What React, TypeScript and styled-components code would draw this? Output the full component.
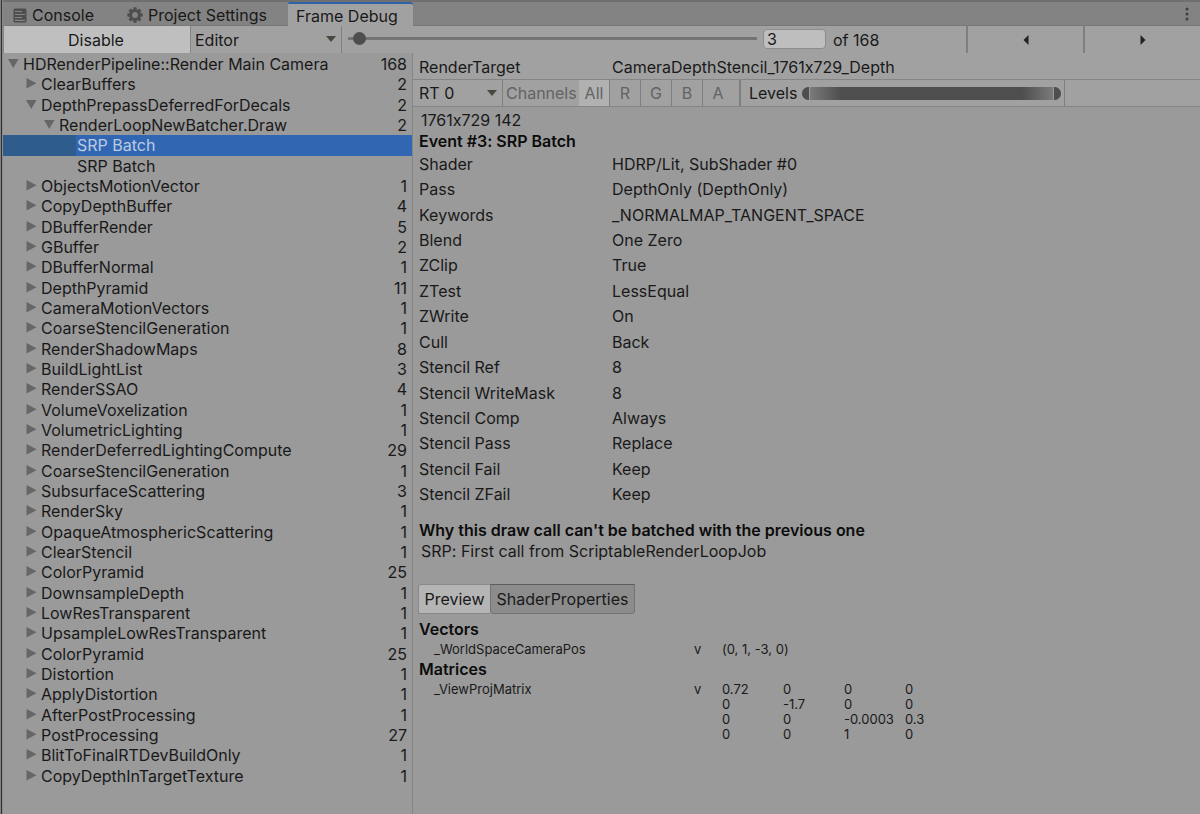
import React, { useState } from "react";
import styled, { createGlobalStyle } from "styled-components";

const c = {
  panel: "#9a9a9a",
  bar: "#a1a1a1",
  tabBar: "#838383",
  line: "#858585",
  divider: "#7f7f7f",
  text: "#191919",
  dim: "#636363",
  arrow: "#666666",
  dark: "#4e4e4e",
  blue: "#3166b3",
};

const GlobalStyle = createGlobalStyle`
  * { box-sizing: border-box; }
  body {
    margin: 0;
    background: ${c.panel};
    color: ${c.text};
    font: 16px/20px Inter, "Liberation Sans", sans-serif;
    font-feature-settings: "calt" 0;
  }
  button, input, select { font: inherit; font-feature-settings: inherit; color: inherit; margin: 0; }
  button { cursor: pointer; }
`;

const Window = styled.div`
  min-height: 100vh;
  display: flex;
  flex-direction: column;
  border-left: 1px solid #828282;
  box-shadow: inset 1px 0 0 #303030, inset 2px 0 0 #8c8c8c;
  padding-left: 2px;
`;

const TabBar = styled.nav`
  height: 26px;
  display: flex;
  align-items: stretch;
  background: ${c.tabBar};
  border-top: 2px solid #6f6f6f;
  border-bottom: 1px solid #787878;
`;

const Tab = styled.button<{ $active?: boolean; $width: number }>`
  flex: 0 0 ${(p) => p.$width}px;
  display: flex;
  align-items: center;
  gap: 5px;
  padding: 1px 8px 0 ${(p) => (p.$active ? 8 : 10)}px;
  border: 0;
  border-top: 2px solid ${(p) => (p.$active ? "#2f62a6" : "transparent")};
  border-radius: 2px 3px 0 0;
  background: ${(p) => (p.$active ? c.bar : "transparent")};
  margin-bottom: ${(p) => (p.$active ? -1 : 0)}px;
  white-space: nowrap;
  line-height: 18px;
`;

const MenuButton = styled.button`
  margin-left: auto;
  width: 26px;
  padding: 0;
  border: 0;
  background: none;
  display: grid;
  place-items: center;
`;

const Toolbar = styled.div`
  height: 27px;
  display: flex;
  align-items: stretch;
  background: ${c.bar};
`;

const DisableButton = styled.button`
  flex: 0 0 188px;
  padding: 0 2px 0 0;
  border: 0;
  border-left: 1px solid ${c.line};
  border-right: 1px solid ${c.line};
  background: #bfbfbf;
`;

const SelectBox = styled.div<{ $width: number; $indent: number }>`
  position: relative;
  flex: 0 0 ${(p) => p.$width}px;
  border-right: 1px solid ${c.divider};
  display: flex;
  select { padding-left: ${(p) => p.$indent}px; }
  svg {
    position: absolute;
    right: 5px;
    top: 10px;
    pointer-events: none;
  }
`;

const Select = styled.select`
  appearance: none;
  width: 100%;
  padding: 0 20px 0 0;
  border: 0;
  background: transparent;
`;

const FrameSlider = styled.input`
  appearance: none;
  flex: 1 1 409px;
  min-width: 60px;
  height: 24px;
  margin: 0 6px;
  background: transparent;
  &::-webkit-slider-runnable-track {
    height: 3px;
    background: #747474;
  }
  &::-webkit-slider-thumb {
    appearance: none;
    width: 13px;
    height: 13px;
    margin-top: -5px;
    border-radius: 50%;
    background: ${c.dark};
  }
`;

const FrameInput = styled.input`
  width: 63px;
  height: 20px;
  margin-top: 3px;
  padding: 0 3px;
  border: 1px solid #8c8c8c;
  border-radius: 4px;
  background: #bebebe;
`;

const FrameTotal = styled.span`
  flex: 0 0 140px;
  padding: 4px 0 0 7px;
`;

const StepButton = styled.button`
  flex: 0 0 117px;
  padding: 0;
  border: 0;
  border-left: 2px solid ${c.divider};
  background: none;
  display: grid;
  place-items: center;
`;

const Body = styled.main`
  flex: 1;
  display: grid;
  grid-template-columns: minmax(0, 410fr) minmax(0, 787fr);
`;

const TreePane = styled.section`
  border-right: 1px solid ${c.line};
`;

const Tree = styled.ul`
  list-style: none;
  margin: 0;
  padding: 1px 0 0;
  min-height: 733px;
  display: grid;
  grid-auto-rows: 1fr;
`;

const TreeItem = styled.li`
  display: flex;
`;

const TreeRow = styled.button<{ $depth: number; $selected?: boolean }>`
  flex: 1;
  display: flex;
  align-items: center;
  gap: 4px;
  padding: 0 5px 0 ${(p) => 5 + p.$depth * 18}px;
  border: 0;
  text-align: left;
  line-height: 20px;
  color: ${(p) => (p.$selected ? "#bccbe0" : c.text)};
  background: ${(p) =>
    p.$selected ? `linear-gradient(90deg, #2e5c8d 73px, ${c.blue} 73px)` : "transparent"};
  svg, i { flex: 0 0 11px; }
`;

const TreeCount = styled.span`
  margin-left: auto;
`;

const Details = styled.section`
  display: flex;
  flex-direction: column;
`;

const TargetRow = styled.div`
  display: flex;
  align-items: center;
  height: 26px;
  padding: 1px 0 0 6px;
  background: ${c.bar};
  span:first-child { flex: 0 0 193px; }
`;

const ChannelBar = styled.div`
  display: flex;
  height: 28px;
  background: ${c.bar};
  border-top: 1px solid ${c.line};
  border-bottom: 1px solid ${c.line};
`;

const ChannelLabel = styled.span`
  flex: 0 0 76px;
  padding: 3px 0 0 3px;
  color: ${c.dim};
  white-space: nowrap;
`;

const ChannelButton = styled.button<{ $on?: boolean; $last?: boolean }>`
  flex: 0 0 ${(p) => (p.$last ? 38 : 31)}px;
  padding: 0 ${(p) => (p.$last ? 6 : 0)}px 0 0;
  border: 0;
  border-right: ${(p) => (p.$last ? 2 : 1)}px solid ${c.divider};
  color: ${c.dim};
  background: ${(p) => (p.$on ? "#b1b1b1" : "none")};
`;

const LevelsGroup = styled.div`
  flex: 0 1 324px;
  display: flex;
  align-items: center;
  gap: 5px;
  padding: 0 3px 0 8px;
  border-right: 1px solid ${c.divider};
`;

const LevelTrack = styled.div`
  position: relative;
  flex: 1;
  height: 13px;
  border-radius: 7px;
  background: linear-gradient(90deg, #7c7c7c 7px, ${c.dark} 15%, ${c.dark} 85%, #7c7c7c calc(100% - 7px));
`;

const LevelInput = styled.input<{ $end?: boolean }>`
  appearance: none;
  position: absolute;
  inset: 0;
  width: 100%;
  height: 13px;
  background: transparent;
  pointer-events: none;
  &::-webkit-slider-thumb {
    appearance: none;
    pointer-events: auto;
    width: 8px;
    height: 13px;
    background: ${c.dark};
    border: 0 solid #9a9a9a;
    border-width: ${(p) => (p.$end ? "0 0 0 1px" : "0 1px 0 0")};
    border-radius: ${(p) => (p.$end ? "0 7px 7px 0" : "7px 0 0 7px")};
  }
`;

const Content = styled.div`
  padding: 2px 6px 0 6px;
`;

const Note = styled.p`
  margin: 0;
  padding-left: 2px;
  line-height: 22px;
`;

const Heading = styled.h2`
  margin: 0;
  font-size: 16px;
  font-weight: 600;
  line-height: 20px;
  color: #0c0c0c;
`;

const PropertyTable = styled.table`
  width: 100%;
  height: 356px;
  margin-bottom: 13px;
  border-collapse: collapse;
  table-layout: fixed;
  th, td { padding: 0; text-align: left; font-weight: 400; }
  th { width: 193px; }
`;

const ViewTabs = styled.div`
  display: flex;
  margin: 22px 0 5px -1px;
`;

const ViewTab = styled.button<{ $pressed?: boolean }>`
  flex: 0 0 ${(p) => (p.$pressed ? 145 : 72)}px;
  height: 30px;
  padding: 0;
  border: 1px solid ${(p) => (p.$pressed ? "#737373" : "#888888")};
  border-top-color: ${(p) => (p.$pressed ? "#5e5e5e" : "#8a8a8a")};
  border-right-width: ${(p) => (p.$pressed ? 1 : 0)}px;
  border-radius: ${(p) => (p.$pressed ? "0 0 4px 4px" : "3px 0 0 0")};
  background: ${(p) => (p.$pressed ? "#8c8c8c" : "#b5b5b5")};
`;

const ValueTable = styled.table`
  border-collapse: collapse;
  table-layout: fixed;
  width: 520px;
  font-size: 13px;
  line-height: 15px;
  th, td { padding: 0; text-align: left; font-weight: 400; white-space: nowrap; }
  th { padding-left: 15px; }
`;

const ValueBlock = styled.div`
  padding: 3px 0 2px;
`;

type Node = { name: string; count?: number; depth: number; open?: boolean; selected?: boolean };

const leaf = (name: string, count: number): Node => ({ name, count, depth: 1 });

const nodes: Node[] = [
  { name: "HDRenderPipeline::Render Main Camera", count: 168, depth: 0, open: true },
  leaf("ClearBuffers", 2),
  { name: "DepthPrepassDeferredForDecals", count: 2, depth: 1, open: true },
  { name: "RenderLoopNewBatcher.Draw", count: 2, depth: 2, open: true },
  { name: "SRP Batch", depth: 3, selected: true },
  { name: "SRP Batch", depth: 3 },
  leaf("ObjectsMotionVector", 1),
  leaf("CopyDepthBuffer", 4),
  leaf("DBufferRender", 5),
  leaf("GBuffer", 2),
  leaf("DBufferNormal", 1),
  leaf("DepthPyramid", 11),
  leaf("CameraMotionVectors", 1),
  leaf("CoarseStencilGeneration", 1),
  leaf("RenderShadowMaps", 8),
  leaf("BuildLightList", 3),
  leaf("RenderSSAO", 4),
  leaf("VolumeVoxelization", 1),
  leaf("VolumetricLighting", 1),
  leaf("RenderDeferredLightingCompute", 29),
  leaf("CoarseStencilGeneration", 1),
  leaf("SubsurfaceScattering", 3),
  leaf("RenderSky", 1),
  leaf("OpaqueAtmosphericScattering", 1),
  leaf("ClearStencil", 1),
  leaf("ColorPyramid", 25),
  leaf("DownsampleDepth", 1),
  leaf("LowResTransparent", 1),
  leaf("UpsampleLowResTransparent", 1),
  leaf("ColorPyramid", 25),
  leaf("Distortion", 1),
  leaf("ApplyDistortion", 1),
  leaf("AfterPostProcessing", 1),
  leaf("PostProcessing", 27),
  leaf("BlitToFinalRTDevBuildOnly", 1),
  leaf("CopyDepthInTargetTexture", 1),
];

const properties: [string, string][] = [
  ["Shader", "HDRP/Lit, SubShader #0"],
  ["Pass", "DepthOnly (DepthOnly)"],
  ["Keywords", "_NORMALMAP_TANGENT_SPACE"],
  ["Blend", "One Zero"],
  ["ZClip", "True"],
  ["ZTest", "LessEqual"],
  ["ZWrite", "On"],
  ["Cull", "Back"],
  ["Stencil Ref", "8"],
  ["Stencil WriteMask", "8"],
  ["Stencil Comp", "Always"],
  ["Stencil Pass", "Replace"],
  ["Stencil Fail", "Keep"],
  ["Stencil ZFail", "Keep"],
];

const matrix = [
  ["0.72", "0", "0", "0"],
  ["0", "-1.7", "0", "0"],
  ["0", "0", "-0.0003", "0.3"],
  ["0", "0", "1", "0"],
];

const Foldout = ({ open }: { open?: boolean }) => (
  <svg width="11" height="14" viewBox="0 0 11 14" aria-hidden="true">
    <path d={open ? "M0 2h10.5L5.3 11z" : "M0.5 1v10.5l10-5.2z"} fill={c.arrow} />
  </svg>
);

const DropArrow = () => (
  <svg width="10" height="6" viewBox="0 0 10 6" aria-hidden="true">
    <path d="M0 0h10L5 6z" fill="#484840" />
  </svg>
);

const ConsoleIcon = () => (
  <svg width="14" height="15" viewBox="0 0 14 15" aria-hidden="true">
    <rect x="0.5" y="0.5" width="13" height="14" rx="1.5" fill={c.dark} />
    <path d="M2 3.5h7M2 6.5h10M2 9.5h7M2 12.3h10" stroke="#858585" strokeWidth="1.2" />
  </svg>
);

const GearIcon = () => (
  <svg width="16" height="16" viewBox="0 0 16 16" aria-hidden="true">
    <g fill={c.dark}>
      {[0, 45, 90, 135].map((a) => (
        <rect key={a} x="6.3" y="0.3" width="3.4" height="15.4" rx="0.8" transform={`rotate(${a} 8 8)`} />
      ))}
      <circle cx="8" cy="8" r="5.8" />
    </g>
    <circle cx="8" cy="8" r="2.9" fill={c.tabBar} />
  </svg>
);

const Columns = () => (
  <colgroup>
    <col style={{ width: 275 }} />
    <col style={{ width: 28 }} />
    <col style={{ width: 61 }} />
    <col style={{ width: 61 }} />
    <col style={{ width: 61 }} />
    <col />
  </colgroup>
);

export default function App() {
  const [frame, setFrame] = useState(3);
  const step = (d: number) => setFrame((f) => Math.min(168, Math.max(1, f + d)));

  return (
    <Window>
      <GlobalStyle />
      <TabBar>
        <Tab $width={114}><ConsoleIcon />Console</Tab>
        <Tab $width={171}><GearIcon />Project Settings</Tab>
        <Tab $width={125} $active>Frame Debug</Tab>
        <MenuButton aria-label="Window menu">
          <svg width="4" height="14" viewBox="0 0 4 14" fill="#404040" aria-hidden="true">
            <circle cx="2" cy="2" r="1.5" />
            <circle cx="2" cy="7" r="1.5" />
            <circle cx="2" cy="12" r="1.5" />
          </svg>
        </MenuButton>
      </TabBar>

      <Toolbar>
        <DisableButton>Disable</DisableButton>
        <SelectBox $width={151} $indent={4}>
          <Select aria-label="Connection target"><option>Editor</option></Select>
          <DropArrow />
        </SelectBox>
        <FrameSlider type="range" min={1} max={168} value={frame} aria-label="Event"
          onChange={(e) => setFrame(Number(e.target.value))} />
        <FrameInput value={frame} aria-label="Event number"
          onChange={(e) => setFrame(Number(e.target.value) || 1)} />
        <FrameTotal>of 168</FrameTotal>
        <StepButton aria-label="Previous event" onClick={() => step(-1)}>
          <svg width="6" height="10" viewBox="0 0 6 10" aria-hidden="true"><path d="M5.5 0v10L0.5 5z" fill="#222" /></svg>
        </StepButton>
        <StepButton aria-label="Next event" onClick={() => step(1)}>
          <svg width="6" height="10" viewBox="0 0 6 10" aria-hidden="true"><path d="M0.5 0v10l5-5z" fill="#222" /></svg>
        </StepButton>
      </Toolbar>

      <Body>
        <TreePane>
          <Tree>
            {nodes.map((n, i) => (
              <TreeItem key={i}>
                <TreeRow $depth={n.depth} $selected={n.selected}>
                  {n.count === undefined ? <i /> : <Foldout open={n.open} />}
                  {n.name}
                  <TreeCount>{n.count}</TreeCount>
                </TreeRow>
              </TreeItem>
            ))}
          </Tree>
        </TreePane>

        <Details>
          <TargetRow>
            <span>RenderTarget</span>
            <span>CameraDepthStencil_1761x729_Depth</span>
          </TargetRow>
          <ChannelBar>
            <SelectBox $width={90} $indent={6}>
              <Select aria-label="Render target index"><option>RT 0</option></Select>
              <DropArrow />
            </SelectBox>
            <ChannelLabel>Channels</ChannelLabel>
            <ChannelButton $on>All</ChannelButton>
            <ChannelButton>R</ChannelButton>
            <ChannelButton>G</ChannelButton>
            <ChannelButton>B</ChannelButton>
            <ChannelButton $last>A</ChannelButton>
            <LevelsGroup>
              <span>Levels</span>
              <LevelTrack>
                <LevelInput type="range" defaultValue={0} aria-label="Black level" />
                <LevelInput type="range" defaultValue={100} aria-label="White level" $end />
              </LevelTrack>
            </LevelsGroup>
          </ChannelBar>

          <Content>
            <Note>1761x729 142</Note>
            <Heading>Event #3: SRP Batch</Heading>
            <PropertyTable>
              <tbody>
                {properties.map(([k, v]) => (
                  <tr key={k}><th scope="row">{k}</th><td>{v}</td></tr>
                ))}
              </tbody>
            </PropertyTable>
            <Heading>Why this draw call can't be batched with the previous one</Heading>
            <Note>SRP: First call from ScriptableRenderLoopJob</Note>

            <ViewTabs>
              <ViewTab>Preview</ViewTab>
              <ViewTab $pressed>ShaderProperties</ViewTab>
            </ViewTabs>

            <Heading>Vectors</Heading>
            <ValueBlock>
              <ValueTable>
                <Columns />
                <tbody>
                  <tr><th scope="row">_WorldSpaceCameraPos</th><td>v</td><td colSpan={4}>(0, 1, -3, 0)</td></tr>
                </tbody>
              </ValueTable>
            </ValueBlock>
            <Heading>Matrices</Heading>
            <ValueBlock>
              <ValueTable>
                <Columns />
                <tbody>
                  {matrix.map((row, i) => (
                    <tr key={i}>
                      <th scope="row">{i === 0 ? "_ViewProjMatrix" : ""}</th>
                      <td>{i === 0 ? "v" : ""}</td>
                      {row.map((v, j) => <td key={j}>{v}</td>)}
                    </tr>
                  ))}
                </tbody>
              </ValueTable>
            </ValueBlock>
          </Content>
        </Details>
      </Body>
    </Window>
  );
}
